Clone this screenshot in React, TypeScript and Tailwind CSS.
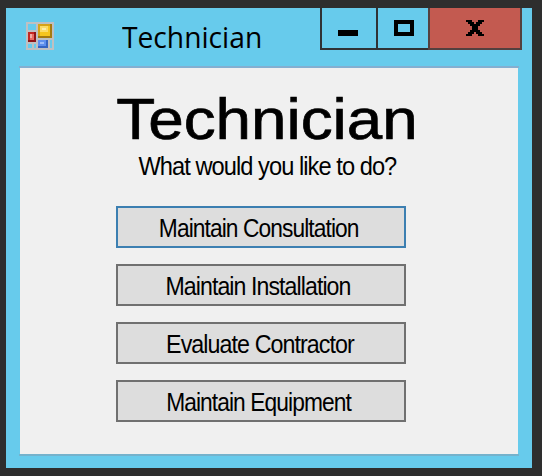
import React from 'react';

const px = (fill: string, rects: number[][]) =>
  rects.map(([x, y, w, h], i) => <rect key={fill + i} x={x} y={y} width={w} height={h} fill={fill} />);

function FormIcon() {
  return (
    <svg viewBox="0 0 14 14" shapeRendering="crispEdges" className="mt-[14px] ml-5 h-7 w-7 shrink-0">
      {px('#bfc0c2', [[0, 0, 14, 14]])}
      {px('#67cbec', [[1, 1, 4, 3], [1, 11, 2, 2], [4, 11, 1, 2], [12, 9, 1, 4]])}
      {px('#8f1517', [[1, 5, 4, 5]])}
      {px('#c52620', [[1, 5, 3, 4]])}
      {px('#e96b60', [[2, 6, 2, 3]])}
      {px('#f2aaa0', [[2, 6, 1, 2]])}
      {px('#a57a10', [[6, 1, 7, 7]])}
      {px('#d6a31a', [[6, 1, 6, 6]])}
      {px('#f6c51f', [[7, 2, 5, 5]])}
      {px('#fbdc68', [[7, 2, 4, 3]])}
      {px('#fdeeaa', [[8, 3, 2, 1]])}
      {px('#3564c4', [[6, 9, 5, 4]])}
      {px('#5e8fee', [[6, 9, 4, 3]])}
      {px('#9dbdfa', [[7, 10, 2, 1]])}
    </svg>
  );
}

function WindowControls() {
  return (
    <div className="flex h-[42px] w-[202px] shrink-0">
      <button aria-label="Minimize" className="flex w-[56px] justify-center border-b-2 border-l-2 border-[#303235]">
        <span className="mt-[22px] mr-[2px] h-[6px] w-5 bg-black" />
      </button>
      <button aria-label="Maximize" className="flex w-[52px] justify-center border-b-2 border-l-2 border-[#303235]">
        <span className="mt-3 ml-[2px] h-4 w-5 border-4 border-black" />
      </button>
      <button aria-label="Close" className="flex w-[94px] justify-center border-x-2 border-b-2 border-[#54403f] bg-[#c35a50]">
        <svg viewBox="0 0 9 8" shapeRendering="crispEdges" className="mt-3 h-4 w-[18px]">
          {px('#000', [
            [0, 0, 3, 1], [6, 0, 3, 1], [1, 1, 3, 1], [5, 1, 3, 1], [2, 2, 5, 1], [3, 3, 3, 2],
            [2, 5, 5, 1], [1, 6, 3, 1], [5, 6, 3, 1], [0, 7, 3, 1], [6, 7, 3, 1],
          ])}
        </svg>
      </button>
    </div>
  );
}

const actions = [
  { label: 'Maintain Consultation', border: 'border-[#3c7fb1]', fit: 'scale-x-[0.91] ml-[-5px]' },
  { label: 'Maintain Installation', border: 'border-[#707070]', fit: 'scale-x-[0.925] ml-[-6px]' },
  { label: 'Evaluate Contractor', border: 'border-[#707070]', fit: 'scale-x-[0.93] ml-[-2px]' },
  { label: 'Maintain Equipment', border: 'border-[#707070]', fit: 'scale-x-[0.91] ml-[-6px]' },
];

export default function App() {
  return (
    <div className="h-[476px] w-[542px] overflow-hidden bg-[#2e2e2e] pt-2 pl-[6px] font-['Liberation_Sans',Arial,sans-serif] text-black">
      <div className="h-[460px] w-[526px] bg-[#67cbec]">
        <header className="flex h-[58px]">
          <FormIcon />
          <div className="w-[266px] pt-[9px] pl-[68px]">
            <span className="inline-block origin-left scale-x-[0.94] font-['Open_Sans','Noto_Sans',sans-serif] text-[30px] leading-10 whitespace-nowrap">
              Technician
            </span>
          </div>
          <WindowControls />
        </header>
        <div className="ml-[13px] h-[2px] w-[500px] bg-[#83afd1]" />
        <main className="ml-[14px] flex h-[386px] w-[498px] flex-col items-center bg-[#f0f0f0]">
          <h1 className="mt-[19px] ml-[-3px] h-[64px] scale-x-[1.1] text-[58px] leading-[64px] whitespace-nowrap [-webkit-text-stroke:0.7px_black]">
            Technician
          </h1>
          <p className="ml-[-4px] h-[30px] scale-x-[0.945] text-[25px] leading-[30px] tracking-[-1px] whitespace-nowrap">
            What would you like to do?
          </p>
          <div className="mt-[25px] ml-[-16px] flex flex-col gap-4">
            {actions.map(({ label, border, fit }) => (
              <button
                key={label}
                className={`flex h-[42px] w-[290px] items-center justify-center border-2 bg-[#dddddd] pt-[2px] ${border}`}
              >
                <span className={`text-[25px] leading-[30px] tracking-[-1px] whitespace-nowrap ${fit}`}>{label}</span>
              </button>
            ))}
          </div>
        </main>
        <div className="ml-[13px] h-[2px] w-[500px] bg-[#75b2cc]" />
      </div>
    </div>
  );
}
